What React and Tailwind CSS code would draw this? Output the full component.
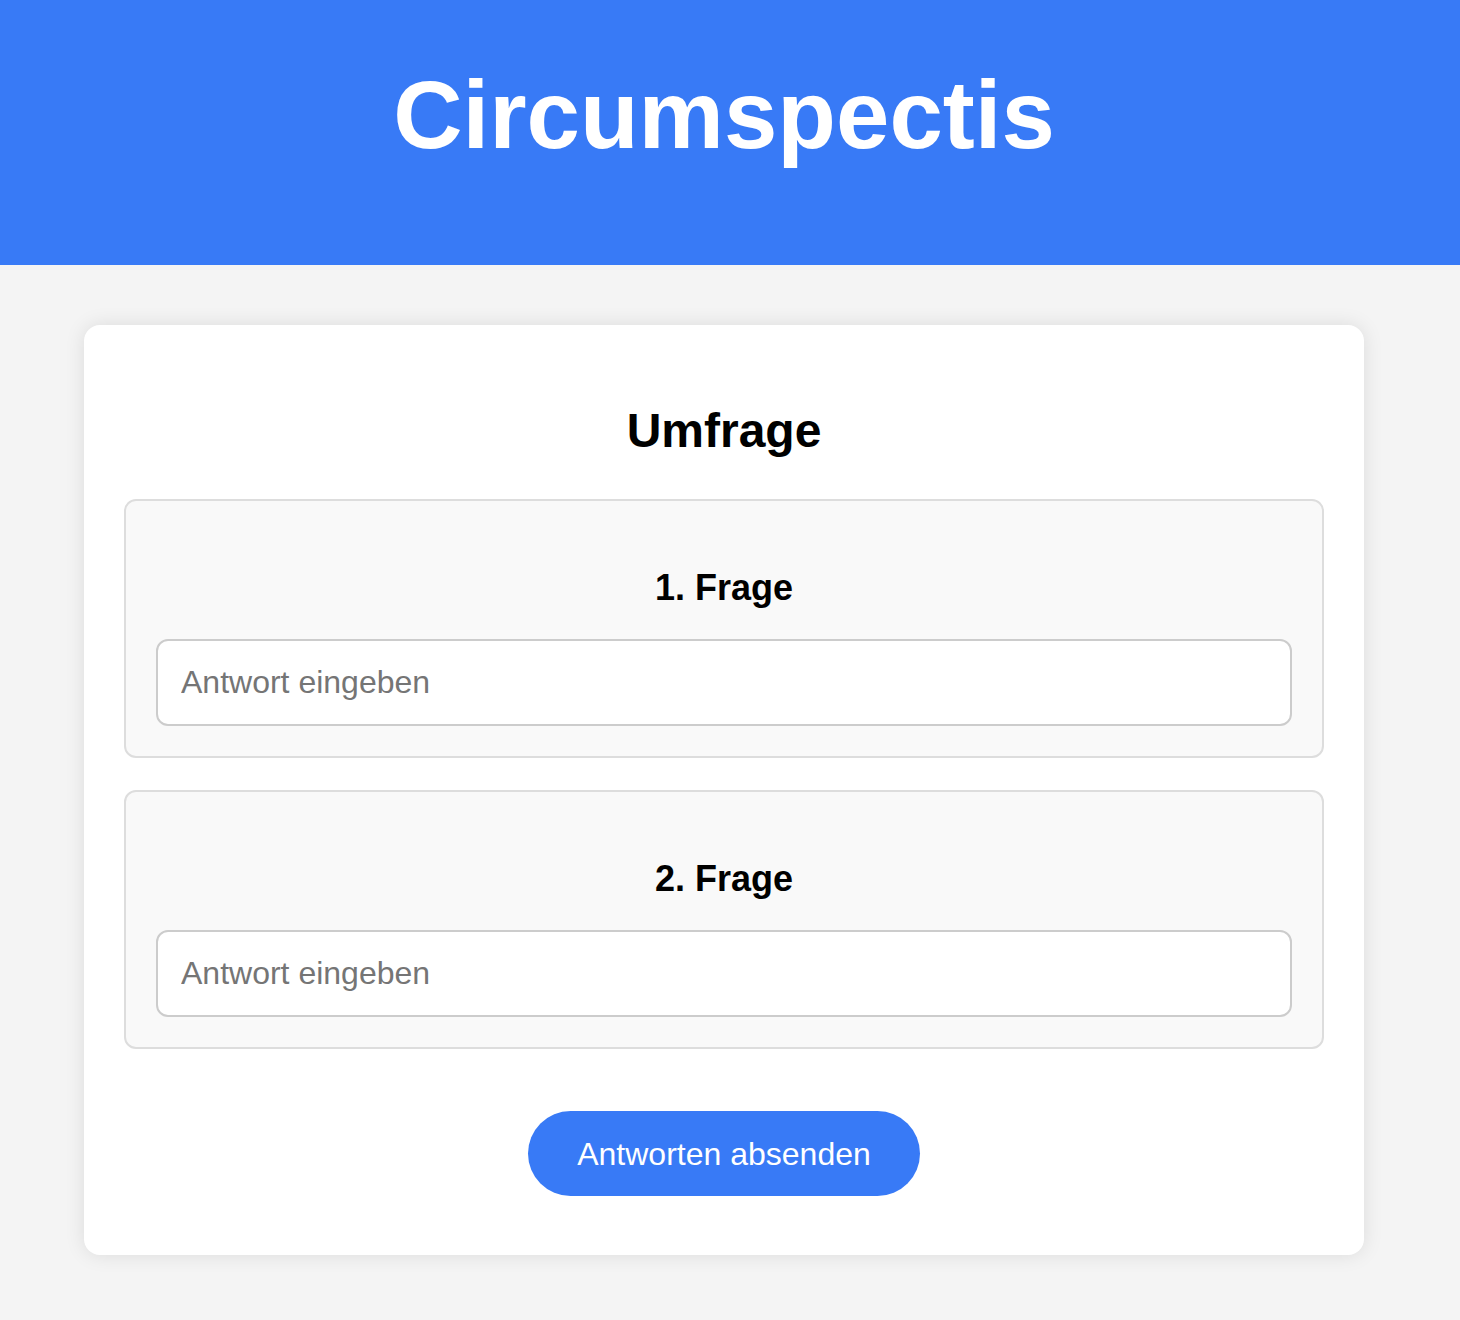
import React from 'react';

const questions = [
  { id: 1, label: '1. Frage' },
  { id: 2, label: '2. Frage' },
];

const App = () => {
  return (
    <div
      className="min-h-screen bg-[#f4f4f4] pb-[65px]"
      style={{ fontFamily: '"Liberation Sans", Arial, sans-serif' }}
    >
      <header className="h-[265px] bg-[#387af6] pt-[60px] pr-[12px]">
        <h1 className="text-center text-[96px] leading-[110px] font-bold text-white">
          Circumspectis
        </h1>
      </header>

      <main className="pr-[12px] pt-[60px]">
        <div className="mx-auto w-[1280px] rounded-[16px] bg-white px-[40px] pt-[40px] pb-[59px] shadow-[0_0_20px_rgba(0,0,0,0.1)]">
          <h2 className="mt-[38px] mb-[41px] text-center text-[48px] leading-[55px] font-bold text-black">
            Umfrage
          </h2>

          {/* Questions */}
          <div className="flex flex-col gap-[32px]">
            {questions.map((q) => (
              <div
                key={q.id}
                className="rounded-[12px] border-2 border-[#dddddd] bg-[#f9f9f9] p-[30px]"
              >
                <h3 className="mt-[36px] mb-[31px] text-center text-[36px] leading-[41px] font-bold text-black">
                  {q.label}
                </h3>
                <input
                  type="text"
                  placeholder="Antwort eingeben"
                  className="block h-[87px] w-full rounded-[12px] border-2 border-[#cccccc] bg-white px-[23px] text-[32px] text-black outline-none placeholder:text-[#757575]"
                />
              </div>
            ))}
          </div>

          <div className="mt-[62px] flex justify-center">
            <button className="h-[85px] rounded-full bg-[#387af6] px-[49px] text-[32px] text-white">
              Antworten absenden
            </button>
          </div>
        </div>
      </main>
    </div>
  );
};

export default App;
